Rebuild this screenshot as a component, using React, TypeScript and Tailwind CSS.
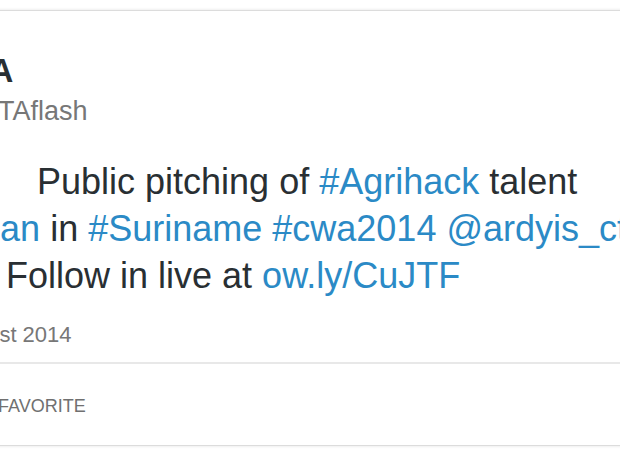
import React from 'react';

const link = 'text-[#2b8ac6]';

const App: React.FC = () => {
  return (
    <div className="w-[620px] h-[465px] overflow-hidden bg-white pt-[10px] font-['Liberation_Sans',Arial,sans-serif]">
      {/* Tweet card, cut off on the left and right like the screenshot */}
      <div className="ml-[-60px] w-[720px] border-y border-[#dcdcdc] bg-white shadow-[0_0_3px_rgba(0,0,0,0.12)]">
        <div className="pl-[8px] pt-[41px]">
          {/* Header */}
          <div className="flex flex-col">
            <span className="text-[33px] leading-[38px] font-bold text-[#292f33]">CTA</span>
            <span className="mt-[4px] ml-[3px] text-[27px] leading-[34px] text-[#777777]">@CTAflash</span>
          </div>

          {/* Tweet text */}
          <div className="mt-[30px] text-[36px] leading-[47px] text-[#292f33] whitespace-nowrap">
            <div className="ml-[89px]">
              Public pitching of <span className={link}>#Agrihack</span> talent
            </div>
            <div className="ml-[-94px]">
              <span className={link}>#Caribbean</span> in <span className={link}>#Suriname</span>{' '}
              <span className={link}>#cwa2014</span> <span className={link}>@ardyis_cta</span>
            </div>
            <div className="ml-[58px]">
              Follow in live at <span className={link}>ow.ly/CuJTF</span>
            </div>
          </div>

          {/* Date */}
          <div className="mt-[23px] text-[22px] leading-[26px] text-[#777777]">August 2014</div>
        </div>

        {/* Actions */}
        <div className="mt-[14px] border-t-2 border-[#e8e8e8] pl-[58px] pt-[31px] pb-[26px]">
          <span className="text-[18px] leading-[22px] text-[#707070]">FAVORITE</span>
        </div>
      </div>
    </div>
  );
};

export default App;
